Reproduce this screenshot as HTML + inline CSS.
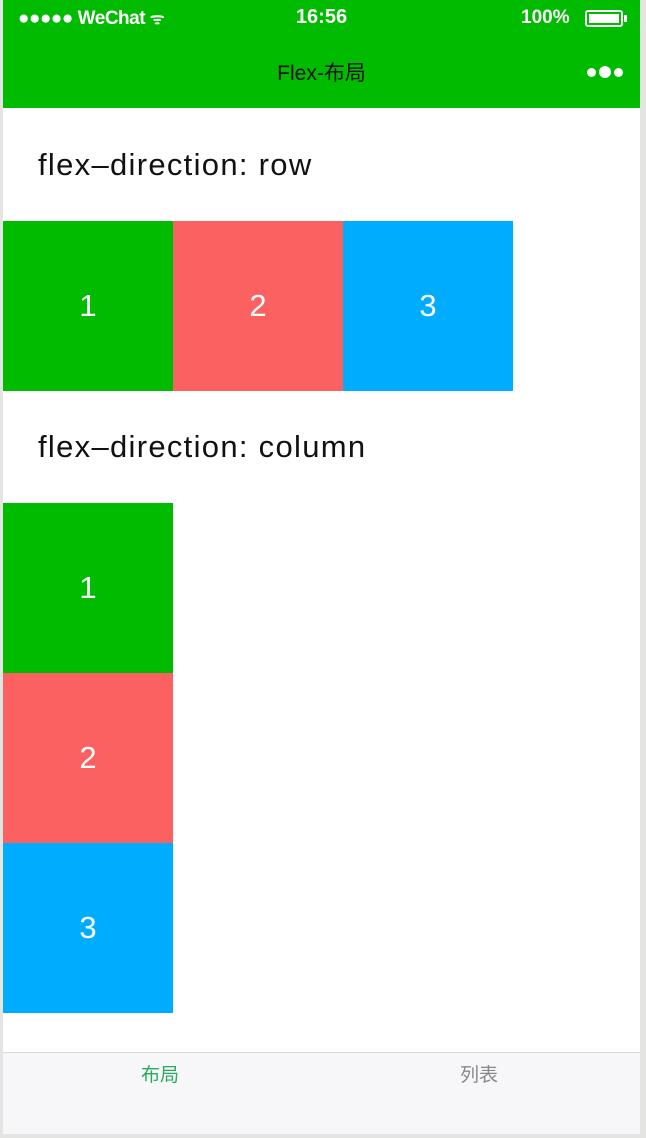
<!DOCTYPE html>
<html><head><meta charset="utf-8"><style>
*{margin:0;padding:0;box-sizing:border-box}
body{width:646px;height:1138px;background:#e4e4e2;position:relative;overflow:hidden;font-family:"Liberation Sans","Noto Sans CJK SC",sans-serif}
#app{position:absolute;left:3px;top:0;width:637px;height:1134px;background:#fff}
.hdr{position:absolute;left:0;top:0;width:637px;height:108px;background:#00bb00;color:#fff}
.t{position:absolute;font-size:31px;color:#111;left:35px;letter-spacing:1.3px}
.b{position:absolute;width:170px;height:170px;color:#fff;font-size:31px;display:flex;align-items:center;justify-content:center}
.g{background:#00bb00}.r{background:#fc6162}.bl{background:#00acfe}
.tab{position:absolute;left:0;top:1052px;width:637px;height:82px;background:#f7f7f9;border-top:1px solid #d8d8d8}
</style></head><body><div id="app">
<div class="hdr">
<div style="position:absolute;left:15px;top:7px;font-size:19px;font-weight:bold;letter-spacing:-0.5px">●●●●● WeChat <span style="font-size:16px">ᯤ</span></div>
<div style="position:absolute;left:0;width:637px;text-align:center;top:6px;font-size:20px;font-weight:bold">16:56</div>
<div style="position:absolute;left:518px;top:7px;font-size:19px;font-weight:bold">100%</div>
<div style="position:absolute;left:582px;top:10px;width:38px;height:17px;border:2px solid #fff;border-radius:3px;padding:2px"><div style="background:#fff;width:100%;height:100%"></div></div>
<div style="position:absolute;left:621px;top:15px;width:3px;height:7px;background:#fff"></div>
<div style="position:absolute;left:0;width:637px;text-align:center;top:57px;font-size:21px;color:#111">Flex-布局</div>
<div style="position:absolute;left:584px;top:68px;width:9px;height:9px;border-radius:50%;background:#fff"></div>
<div style="position:absolute;left:596px;top:66px;width:12px;height:12px;border-radius:50%;background:#fff"></div>
<div style="position:absolute;left:611px;top:68px;width:9px;height:9px;border-radius:50%;background:#fff"></div>
</div>
<div class="t" style="top:147px">flex–direction: row</div>
<div class="b g" style="left:0;top:221px">1</div>
<div class="b r" style="left:170px;top:221px">2</div>
<div class="b bl" style="left:340px;top:221px">3</div>
<div class="t" style="top:429px">flex–direction: column</div>
<div class="b g" style="left:0;top:503px">1</div>
<div class="b r" style="left:0;top:673px">2</div>
<div class="b bl" style="left:0;top:843px">3</div>
<div class="tab">
<div style="position:absolute;left:138px;top:7px;font-size:19px;color:#2aaa5c">布局</div>
<div style="position:absolute;left:457px;top:7px;font-size:19px;color:#888">列表</div>
</div>
</div></body></html>
